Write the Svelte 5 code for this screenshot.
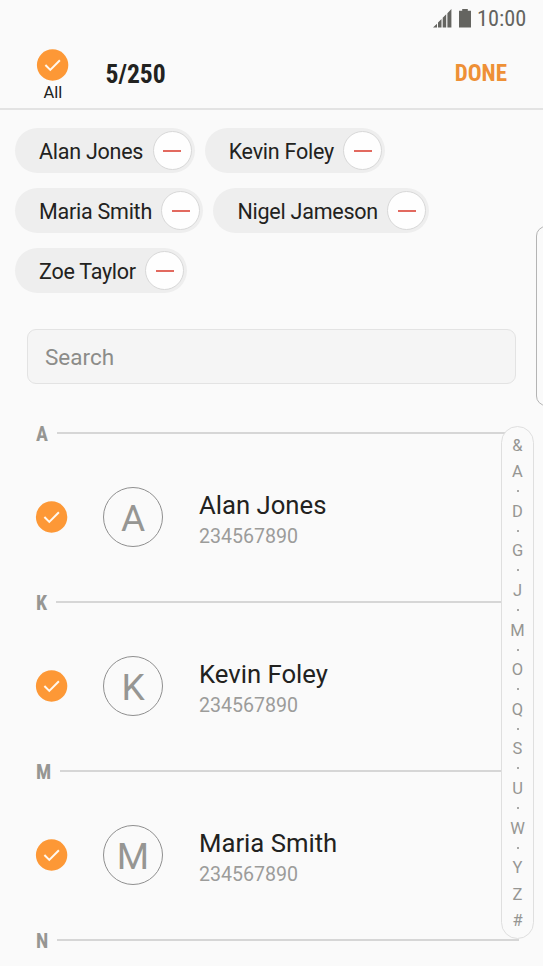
<script lang="ts">
  interface Contact {
    name: string;
    number: string;
  }

  interface Section {
    letter: string;
    contacts: Contact[];
  }

  const limit = 250;

  const sections: Section[] = [
    { letter: 'A', contacts: [{ name: 'Alan Jones', number: '234567890' }] },
    { letter: 'K', contacts: [{ name: 'Kevin Foley', number: '234567890' }] },
    { letter: 'M', contacts: [{ name: 'Maria Smith', number: '234567890' }] },
    { letter: 'N', contacts: [] }
  ];

  const indexEntries = [
    '&', 'A', '·', 'D', '·', 'G', '·', 'J', '·', 'M', '·', 'O', '·',
    'Q', '·', 'S', '·', 'U', '·', 'W', '·', 'Y', 'Z', '#'
  ];

  let query = $state('');
  let selected = $state(['Alan Jones', 'Kevin Foley', 'Maria Smith', 'Nigel Jameson', 'Zoe Taylor']);

  function toggle(name: string): void {
    selected = selected.includes(name)
      ? selected.filter((item) => item !== name)
      : [...selected, name];
  }
</script>

{#snippet check(on: boolean)}
  <svg class="check" viewBox="0 0 32 32" aria-hidden="true">
    {#if on}
      <circle cx="15.6" cy="16" r="15.7" fill="#fd9836" />
      <path d="M8.4 16l4.900 4.900 9.600-9.700" fill="none" stroke="#fff8ee" stroke-width="2" />
    {:else}
      <circle cx="15.6" cy="16" r="15" fill="none" stroke="#9a9a98" />
    {/if}
  </svg>
{/snippet}

<div class="screen">
  <div class="status-bar">
    <svg class="signal" viewBox="0 0 19 19" aria-hidden="true">
      <path d="M0 18.500l4-3.700v3.700zM5 18.500v-5l3.500-3.500v8.500zM9.700 18.500V8.800l3.500-3.500v13.200zM14.400 18.500V4.200L18.400 0v18.500z" />
    </svg>
    <svg class="battery" viewBox="0 0 12 19" aria-hidden="true">
      <path d="M3.200 0h5.600v1.700H12V18.500H0V1.700h3.200z" />
    </svg>
    <span class="clock condensed">10:00</span>
  </div>

  <header class="action-bar">
    <button class="select-all">
      {@render check(true)}
      <span>All</span>
    </button>
    <span class="count condensed">{selected.length}/{limit}</span>
    <button class="done condensed">DONE</button>
  </header>

  <div class="chips">
    {#each selected as name (name)}
      <div class="chip">
        <span>{name}</span>
        <button class="remove" aria-label="Remove {name}" onclick={() => toggle(name)}></button>
      </div>
    {/each}
  </div>

  <input class="search" type="text" placeholder="Search" aria-label="Search" bind:value={query} />

  <main class="list">
    {#each sections as section (section.letter)}
      <section>
        <h2 class="condensed">{section.letter}</h2>
        {#each section.contacts as contact (contact.name)}
          <button class="contact" onclick={() => toggle(contact.name)}>
            {@render check(selected.includes(contact.name))}
            <span class="avatar">{contact.name[0]}</span>
            <span class="details">
              <span class="name">{contact.name}</span>
              <span class="number">{contact.number}</span>
            </span>
          </button>
        {/each}
      </section>
    {/each}
  </main>

  <nav class="index">
    {#each indexEntries as entry}
      <span class:dot={entry === '·'}>{entry === '·' ? '' : entry}</span>
    {/each}
  </nav>

  <div class="edge-handle"></div>
</div>

<style>
  :global(body) {
    margin: 0;
    background: #fafafa;
  }

  .screen {
    position: relative;
    display: flex;
    flex-direction: column;
    box-sizing: border-box;
    width: 543px;
    height: 966px;
    overflow: hidden;
    background: #fafafa;
    color: #222220;
    font-family: Roboto, "Liberation Sans", sans-serif;
  }

  .screen > * {
    flex-shrink: 0;
  }

  button {
    padding: 0;
    border: 0;
    background: none;
    color: inherit;
    font-family: inherit;
  }

  .condensed {
    font-family: "Roboto Condensed", Roboto, sans-serif;
    font-stretch: 75%;
  }

  .check {
    display: block;
    flex: none;
    width: 32px;
    height: 32px;
    overflow: visible;
  }

  .status-bar {
    display: flex;
    align-items: center;
    box-sizing: border-box;
    height: 37px;
    padding: 0 16px 0 433px;
    fill: #646460;
    color: #646460;
  }

  .signal {
    width: 19px;
    height: 19px;
  }

  .battery {
    width: 12px;
    height: 19px;
    margin-left: 7px;
  }

  .clock {
    margin-left: 6px;
    font-size: 22.3px;
    line-height: 37px;
  }

  .action-bar {
    display: flex;
    align-items: center;
    box-sizing: border-box;
    height: 73px;
    padding: 2px 36px 0 37px;
    border-bottom: 2px solid #e3e3e3;
  }

  .select-all {
    display: flex;
    flex-direction: column;
    align-items: center;
    width: 32px;
    padding-top: 5px;
    font-size: 16.5px;
    line-height: 23px;
  }

  .count {
    margin-left: 36.5px;
    font-size: 25.6px;
    font-weight: 700;
  }

  .done {
    margin-left: auto;
    color: #ee9036;
    font-size: 23px;
    font-weight: 700;
  }

  .chips {
    display: flex;
    flex-wrap: wrap;
    gap: 15px 10px;
    padding: 18px 15px 0;
  }

  .chip {
    display: flex;
    align-items: center;
    box-sizing: border-box;
    height: 45px;
    padding: 0 3px 0 24px;
    border-radius: 23px;
    background: #eeeeee;
    font-size: 21.5px;
    letter-spacing: -0.25px;
  }

  .chip span {
    padding-top: 1px;
  }

  .remove {
    display: flex;
    align-items: center;
    justify-content: center;
    box-sizing: border-box;
    width: 39px;
    height: 39px;
    margin-left: 9.5px;
    border: 1px solid #d8d8d8;
    border-radius: 50%;
    background: #fefefe;
  }

  .remove::before {
    content: "";
    width: 18px;
    height: 2px;
    background: #e2695f;
  }

  .search {
    box-sizing: border-box;
    width: 489px;
    height: 55px;
    margin: 36px 27px 0;
    padding: 0 17px;
    border: 1px solid #e3e3e3;
    border-radius: 9px;
    outline: none;
    background: #f5f5f5;
    color: #222220;
    font-family: inherit;
    font-size: 22.5px;
  }

  .search::placeholder {
    color: #8c8c89;
    opacity: 1;
  }

  .list {
    padding: 35px 24px 0 36px;
  }

  section {
    height: 169px;
  }

  h2 {
    display: flex;
    align-items: center;
    gap: 9px;
    margin: 0;
    color: #969693;
    font-size: 20px;
    font-weight: 700;
    line-height: 30px;
  }

  h2::after {
    content: "";
    flex: 1;
    height: 2px;
    margin-bottom: 2px;
    background: #d6d6d6;
  }

  .contact {
    display: flex;
    align-items: center;
    width: 100%;
    height: 136px;
    text-align: left;
  }

  .avatar {
    box-sizing: border-box;
    width: 60px;
    height: 60px;
    margin-left: 35px;
    border: 1px solid #8f8f8f;
    border-radius: 50%;
    color: #969693;
    font-size: 37px;
    line-height: 61px;
    text-align: center;
  }

  .details {
    display: flex;
    flex-direction: column;
    gap: 2px;
    margin-left: 36px;
    padding-top: 5px;
  }

  .name {
    font-size: 25.7px;
    line-height: 32px;
  }

  .number {
    color: #9c9c9a;
    font-size: 19.6px;
    line-height: 28px;
  }

  .index {
    position: absolute;
    top: 426px;
    left: 501px;
    display: flex;
    flex-direction: column;
    align-items: center;
    box-sizing: border-box;
    width: 33px;
    height: 513px;
    padding: 5px 0;
    border: 1px solid #dfdfdf;
    border-radius: 17px;
    background: #fafafa;
    color: #969693;
    font-size: 16.5px;
  }

  .index span {
    height: 26.3px;
    line-height: 27px;
  }

  .index .dot {
    display: flex;
    align-items: center;
    height: 13.3px;
  }

  .dot::before {
    content: "";
    width: 2px;
    height: 2px;
    background: #a9a9a7;
  }

  .edge-handle {
    position: absolute;
    top: 226px;
    left: 536px;
    box-sizing: border-box;
    width: 20px;
    height: 180px;
    border: 1px solid #b4b4b4;
    border-radius: 10px;
  }
</style>
